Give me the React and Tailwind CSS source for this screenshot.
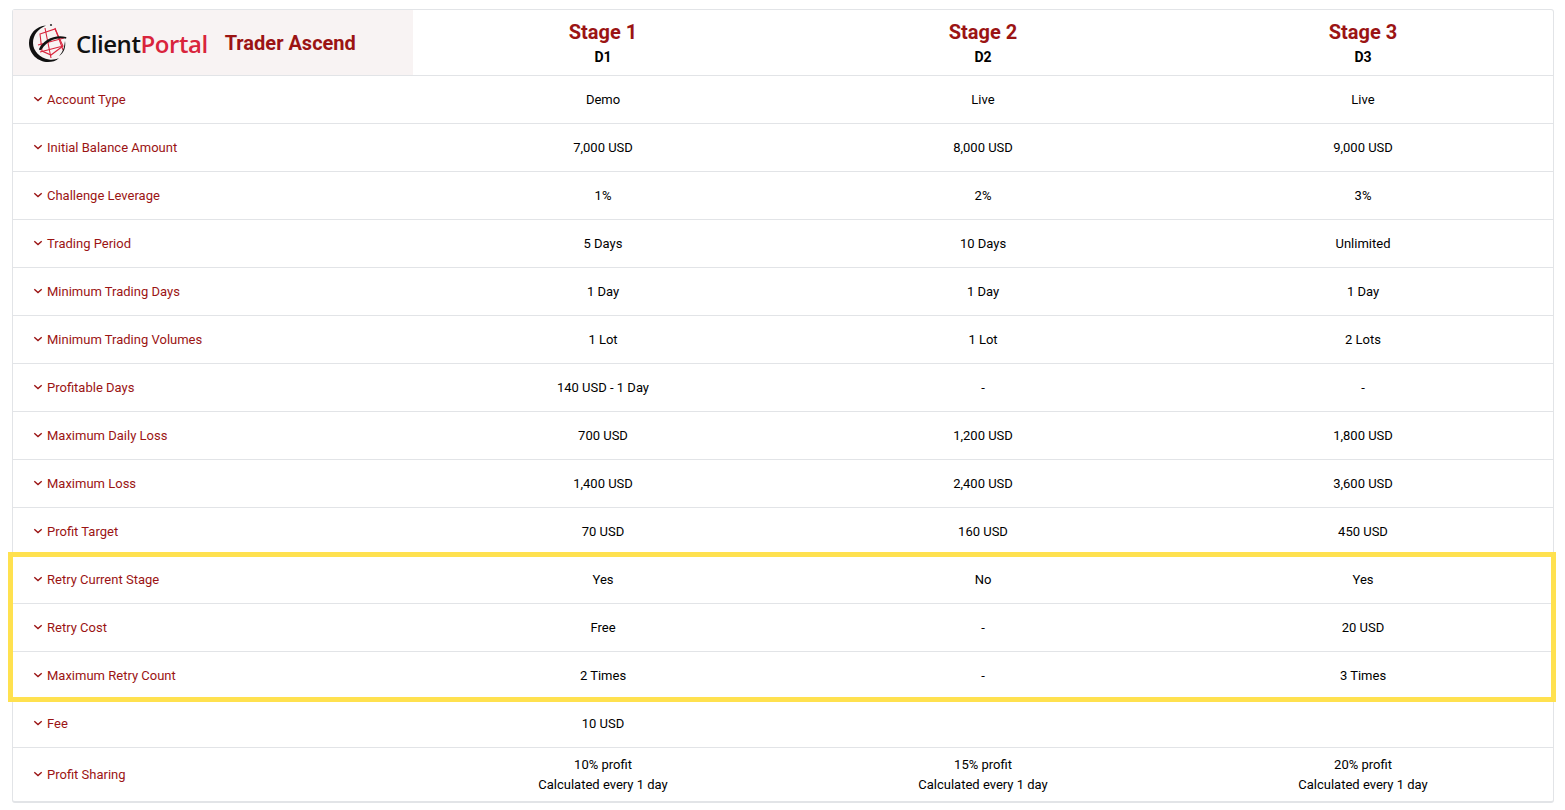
import React from "react";

const rows = [
  { label: "Account Type", values: ["Demo", "Live", "Live"] },
  { label: "Initial Balance Amount", values: ["7,000 USD", "8,000 USD", "9,000 USD"] },
  { label: "Challenge Leverage", values: ["1%", "2%", "3%"] },
  { label: "Trading Period", values: ["5 Days", "10 Days", "Unlimited"] },
  { label: "Minimum Trading Days", values: ["1 Day", "1 Day", "1 Day"] },
  { label: "Minimum Trading Volumes", values: ["1 Lot", "1 Lot", "2 Lots"] },
  { label: "Profitable Days", values: ["140 USD - 1 Day", "-", "-"] },
  { label: "Maximum Daily Loss", values: ["700 USD", "1,200 USD", "1,800 USD"] },
  { label: "Maximum Loss", values: ["1,400 USD", "2,400 USD", "3,600 USD"] },
  { label: "Profit Target", values: ["70 USD", "160 USD", "450 USD"] },
  { label: "Retry Current Stage", values: ["Yes", "No", "Yes"] },
  { label: "Retry Cost", values: ["Free", "-", "20 USD"] },
  { label: "Maximum Retry Count", values: ["2 Times", "-", "3 Times"] },
  { label: "Fee", values: ["10 USD", "", ""] },
];

const stages = [
  { name: "Stage 1", code: "D1" },
  { name: "Stage 2", code: "D2" },
  { name: "Stage 3", code: "D3" },
];

function Chevron() {
  return (
    <svg width="10" height="6" viewBox="0 0 10 6" fill="none" className="mr-[4px] mb-px shrink-0">
      <path d="M1.300 1.200L5 4.500l3.700-3.300" stroke="#9b1414" strokeWidth="1.400" />
    </svg>
  );
}

function Logo() {
  return (
    <svg width="40" height="40" viewBox="0 0 40 40" fill="none" className="shrink-0">
      <g stroke="#d9243c" strokeWidth="1.100" fill="none">
        <path d="M12 11l15-5 8 17-12 9-9-4z" />
        <path d="M17 5l6 30M27 5l8 22M10 22l26-7M12 29l23-6" />
      </g>
      <path
        d="M18 2.500C8 3 1 11 1 20c0 11 9 19 19 19 4 0 8-1 11-4-3 1.500-7 2-10 1.500C12 35 5 28 5 20 5 12 10 6 18 2.500z"
        fill="#111"
      />
      <path d="M11 26C15 17 27 11 38 14c1 1 0 2-1 1.500C28 14 19 18 14 26c-1 1.500-3 1.500-3 0z" fill="#111" />
      <path d="M37 18c1 6-1 12-6 15 2-2 4-5 5-9z" fill="#111" />
      <circle cx="23" cy="2" r="1.100" fill="#333" />
    </svg>
  );
}

export default function App() {
  return (
    <div className="min-h-[810px] bg-white pt-[9px] px-[12px] font-['Roboto',sans-serif]">
      <div className="relative w-[1542px] rounded-[3px] border border-b-2 border-[#e2e4e7]">
        <div className="flex h-[66px] border-b border-[#e2e4e7]">
          <div className="flex w-[400px] items-center bg-[#f8f3f3] pl-[15px]">
            <Logo />
            <span className="ml-[8px] mt-[2px] font-['Open_Sans',sans-serif] text-[24px] font-semibold tracking-[-0.45px] text-[#111]">
              Client<span className="text-[#d9243c]">Portal</span>
            </span>
            <span className="ml-[17px] text-[20px] font-bold text-[#9b1414]">Trader Ascend</span>
          </div>
          {stages.map((stage) => (
            <div key={stage.code} className="flex w-[380px] flex-col items-center pt-[9px]">
              <div className="text-[20px] font-bold leading-[26px] text-[#9b1414]">{stage.name}</div>
              <div className="text-[14px] font-bold leading-[24px] text-black">{stage.code}</div>
            </div>
          ))}
        </div>

        {rows.map((row) => (
          <div key={row.label} className="flex h-[48px] items-center border-b border-[#e2e4e7] text-[13px]">
            <div className="flex w-[400px] items-center pl-[20px] text-[#9b1414]">
              <Chevron />
              {row.label}
            </div>
            {row.values.map((value, index) => (
              <div key={index} className="w-[380px] text-center text-black">
                {value}
              </div>
            ))}
          </div>
        ))}

        <div className="flex h-[53px] items-center text-[13px]">
          <div className="flex w-[400px] items-center pl-[20px] text-[#9b1414]">
            <Chevron />
            Profit Sharing
          </div>
          {["10%", "15%", "20%"].map((pct) => (
            <div key={pct} className="w-[380px] text-center leading-[20px] text-black">
              <div>{pct} profit</div>
              <div>Calculated every 1 day</div>
            </div>
          ))}
        </div>

        {/* highlight around the retry rows */}
        <div className="absolute left-[-5px] top-[542px] h-[150px] w-[1548px] border-[5px] border-[#ffe14f]" />
      </div>
    </div>
  );
}
